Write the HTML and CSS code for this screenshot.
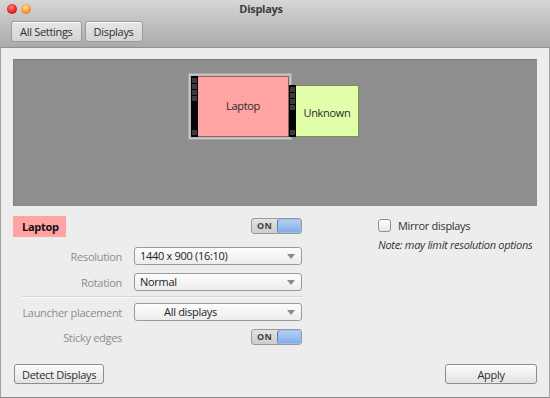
FILE: index.html
```html
<!DOCTYPE html>
<html lang="en">
  <head>
    <meta charset="UTF-8" />
    <title>Displays</title>
    <link rel="stylesheet" href="styles.css">
  </head>
  <body>
    <div class="window">
      <!-- Title bar + breadcrumbs -->
      <div class="titlebar">
        <div class="title-row">
          <span class="dot close"></span>
          <span class="dot minimize"></span>
          <span class="title">Displays</span>
        </div>
        <div class="crumbs">
          <button class="btn crumb">All Settings</button>
          <button class="btn crumb">Displays</button>
        </div>
      </div>

      <div class="content">
        <!-- Monitor arrangement -->
        <div class="canvas">
          <div class="arrangement">
            <div class="monitor-frame">
              <div class="monitor laptop">
                <div class="strip"><i></i><i></i><i></i><i></i><b></b><i></i></div>
                <div class="face">Laptop</div>
              </div>
            </div>
            <div class="monitor unknown">
              <div class="strip"><i></i><i></i><i></i><i></i><b></b><i></i></div>
              <div class="face">Unknown</div>
            </div>
          </div>
        </div>

        <div class="settings">
          <div class="left">
            <div class="head-row">
              <span class="output-name">Laptop</span>
              <span class="switch"><span class="on">ON</span><span class="knob"></span></span>
            </div>
            <div class="field">
              <span class="label">Resolution</span>
              <div class="combo">1440 x 900 (16:10)<span class="arrow"></span></div>
            </div>
            <div class="field">
              <span class="label">Rotation</span>
              <div class="combo">Normal<span class="arrow"></span></div>
            </div>
            <div class="separator"></div>
            <div class="field">
              <span class="label">Launcher placement</span>
              <div class="combo centered">All displays<span class="arrow"></span></div>
            </div>
            <div class="field">
              <span class="label">Sticky edges</span>
              <div class="switch-cell">
                <span class="switch"><span class="on">ON</span><span class="knob"></span></span>
              </div>
            </div>
          </div>
          <div class="right">
            <label class="mirror"><span class="checkbox"></span>Mirror displays</label>
            <div class="note">Note: may limit resolution options</div>
          </div>
        </div>

        <div class="footer">
          <button class="btn action">Detect Displays</button>
          <button class="btn action apply">Apply</button>
        </div>
      </div>
    </div>
  </body>
</html>
```

FILE: styles.css
```css
:root {
  --bg: #ededed;
  --canvas: #8e8e8e;
  --label: #8c8c8c;
  --text: #2e2e2e;
}

body {
  margin: 0;
  font-family: "Open Sans", "Liberation Sans", sans-serif;
  font-size: 11px;
  letter-spacing: -0.3px;
  color: var(--text);
}

.window {
  width: 550px;
  height: 398px;
  box-sizing: border-box;
  background: var(--bg);
  border-left: 1px solid #a0a0a0;
  border-right: 1px solid #a0a0a0;
  border-bottom: 1px solid #8a8a8a;
  display: flex;
  flex-direction: column;
}

/* Title bar */
.titlebar {
  height: 48px;
  box-sizing: border-box;
  background: linear-gradient(#d6d6d6, #c4c4c4 40%, #aaaaaa);
  border-bottom: 1px solid #8f8f8f;
  margin: 0 -1px;
  padding: 0 11px;
}

.title-row {
  height: 17px;
  display: flex;
  align-items: center;
  position: relative;
  gap: 4px;
  margin-left: -4px;
}

.dot {
  width: 10px;
  height: 10px;
  border-radius: 50%;
}

.dot.close {
  background: radial-gradient(circle at 45% 35%, #ff8a7a, #e2261c 55%, #9c1510);
}

.dot.minimize {
  background: radial-gradient(circle at 45% 35%, #ffe2a0, #f5992b 55%, #b9651a);
}

.title {
  position: absolute;
  left: 0;
  right: 24px;
  top: 1px;
  text-align: center;
  font-weight: bold;
  color: #3c3c3c;
  pointer-events: none;
}

.crumbs {
  display: flex;
  gap: 3px;
  margin-top: 4px;
}

.btn {
  font-family: inherit;
  font-size: 11px;
  letter-spacing: -0.3px;
  color: var(--text);
  border: 1px solid #8d8d8d;
  border-radius: 3px;
  background: linear-gradient(#fbfbfb, #e3e3e3);
  padding: 0 7px;
  height: 21px;
  box-shadow: inset 0 1px 0 #fff;
}

.btn.crumb {
  background: linear-gradient(#e6e6e6, #d4d4d4);
  border-color: #9a9a9a;
  padding: 0 8px;
}

/* Content */
.content {
  flex: 1;
  padding: 11px 12px 12px;
  display: flex;
  flex-direction: column;
}

.canvas {
  height: 147px;
  background: var(--canvas);
  box-shadow: inset 1px 1px 0 #7e7e7e;
}

.arrangement {
  display: flex;
  align-items: flex-start;
  padding: 14px 0 0 175px;
}

.monitor-frame {
  padding: 3px;
  background: #b6b6b6;
  box-shadow: inset 0 0 0 1px #a6a6a6, inset 0 0 0 2px #c8c8c8;
}

.monitor {
  display: flex;
}

.laptop {
  width: 98px;
  height: 61px;
}

.unknown {
  width: 70px;
  height: 52px;
  margin-top: 12px;
  margin-left: -3px;
  position: relative;
}

.strip {
  width: 7px;
  background: #050505;
  display: flex;
  flex-direction: column;
  align-items: center;
  gap: 1px;
  padding-top: 2px;
}

.strip i {
  width: 5px;
  height: 5px;
  background: #3c3c3c;
  flex: none;
}

.strip b {
  flex: 1;
}

.strip i:last-child {
  margin-bottom: 2px;
}

.face {
  flex: 1;
  display: flex;
  align-items: center;
  justify-content: center;
  font-size: 11px;
  color: #2b2b2b;
  box-sizing: border-box;
  border: 1px solid rgba(60, 40, 40, 0.55);
  border-left: none;
}

.laptop .face {
  background: #ffa3a3;
  padding-bottom: 2px;
}

.unknown .face {
  background: #e1fea8;
  border-color: rgba(60, 70, 30, 0.6);
  padding-top: 2px;
}

/* Settings */
.settings {
  display: flex;
  margin-top: 9px;
}

.left {
  width: 290px;
}

.head-row {
  display: flex;
  justify-content: space-between;
  align-items: center;
  height: 22px;
}

.output-name {
  background: #ffa3a3;
  font-weight: bold;
  color: #111;
  padding: 0 9px;
  height: 21px;
  line-height: 21px;
  width: 35px;
}

.switch {
  display: flex;
  width: 51px;
  height: 16px;
  box-sizing: border-box;
  border: 1px solid #9a9a9a;
  border-radius: 3px;
  overflow: hidden;
  background: linear-gradient(#e2e2e2, #cdcdcd);
}

.switch .on {
  width: 25px;
  text-align: center;
  font-size: 9px;
  font-weight: bold;
  letter-spacing: 0.3px;
  color: #444;
  line-height: 14px;
}

.switch .knob {
  flex: 1;
  border-left: 1px solid #5b7fb6;
  border-radius: 3px;
  background: linear-gradient(#b9d4f6, #7daae6);
  box-shadow: inset 0 0 0 1px #9bbdec;
}

.head-row .switch {
  margin-right: 1px;
}

.field {
  display: grid;
  grid-template-columns: 109px 1fr;
  column-gap: 12px;
  align-items: center;
}

.head-row + .field {
  margin-top: 10px;
}

.field + .field {
  margin-top: 8px;
}

.label {
  text-align: right;
  color: var(--label);
}

.combo {
  position: relative;
  height: 18px;
  box-sizing: border-box;
  border: 1px solid #9a9a9a;
  border-radius: 3px;
  background: linear-gradient(#fdfdfd, #ececec);
  padding-left: 5px;
  line-height: 16px;
  color: #222;
  margin-right: 1px;
}

.combo.centered {
  padding-left: 29px;
}

.arrow {
  position: absolute;
  right: 6px;
  top: 6px;
  border-left: 4px solid transparent;
  border-right: 4px solid transparent;
  border-top: 5px solid #8a8a8a;
}

.separator {
  height: 1px;
  background: #d6d6d6;
  border-bottom: 1px solid #fafafa;
  margin: 5px 0 5px 9px;
}

.switch-cell {
  display: flex;
  justify-content: flex-end;
  margin-right: 1px;
}

.right {
  margin-left: 75px;
  padding-top: 3px;
}

.mirror {
  display: flex;
  align-items: center;
  gap: 7px;
  color: #333;
}

.checkbox {
  width: 11px;
  height: 11px;
  border: 1px solid #8f8f8f;
  border-radius: 3px;
  background: linear-gradient(#fff, #e6e6e6);
}

.note {
  font-style: italic;
  color: #333;
  margin-top: 4px;
}

/* Footer */
.footer {
  margin-top: auto;
  display: flex;
  justify-content: space-between;
  padding: 0 0 1px 1px;
}

.btn.action {
  height: 20px;
}

.btn.apply {
  width: 92px;
}
```
